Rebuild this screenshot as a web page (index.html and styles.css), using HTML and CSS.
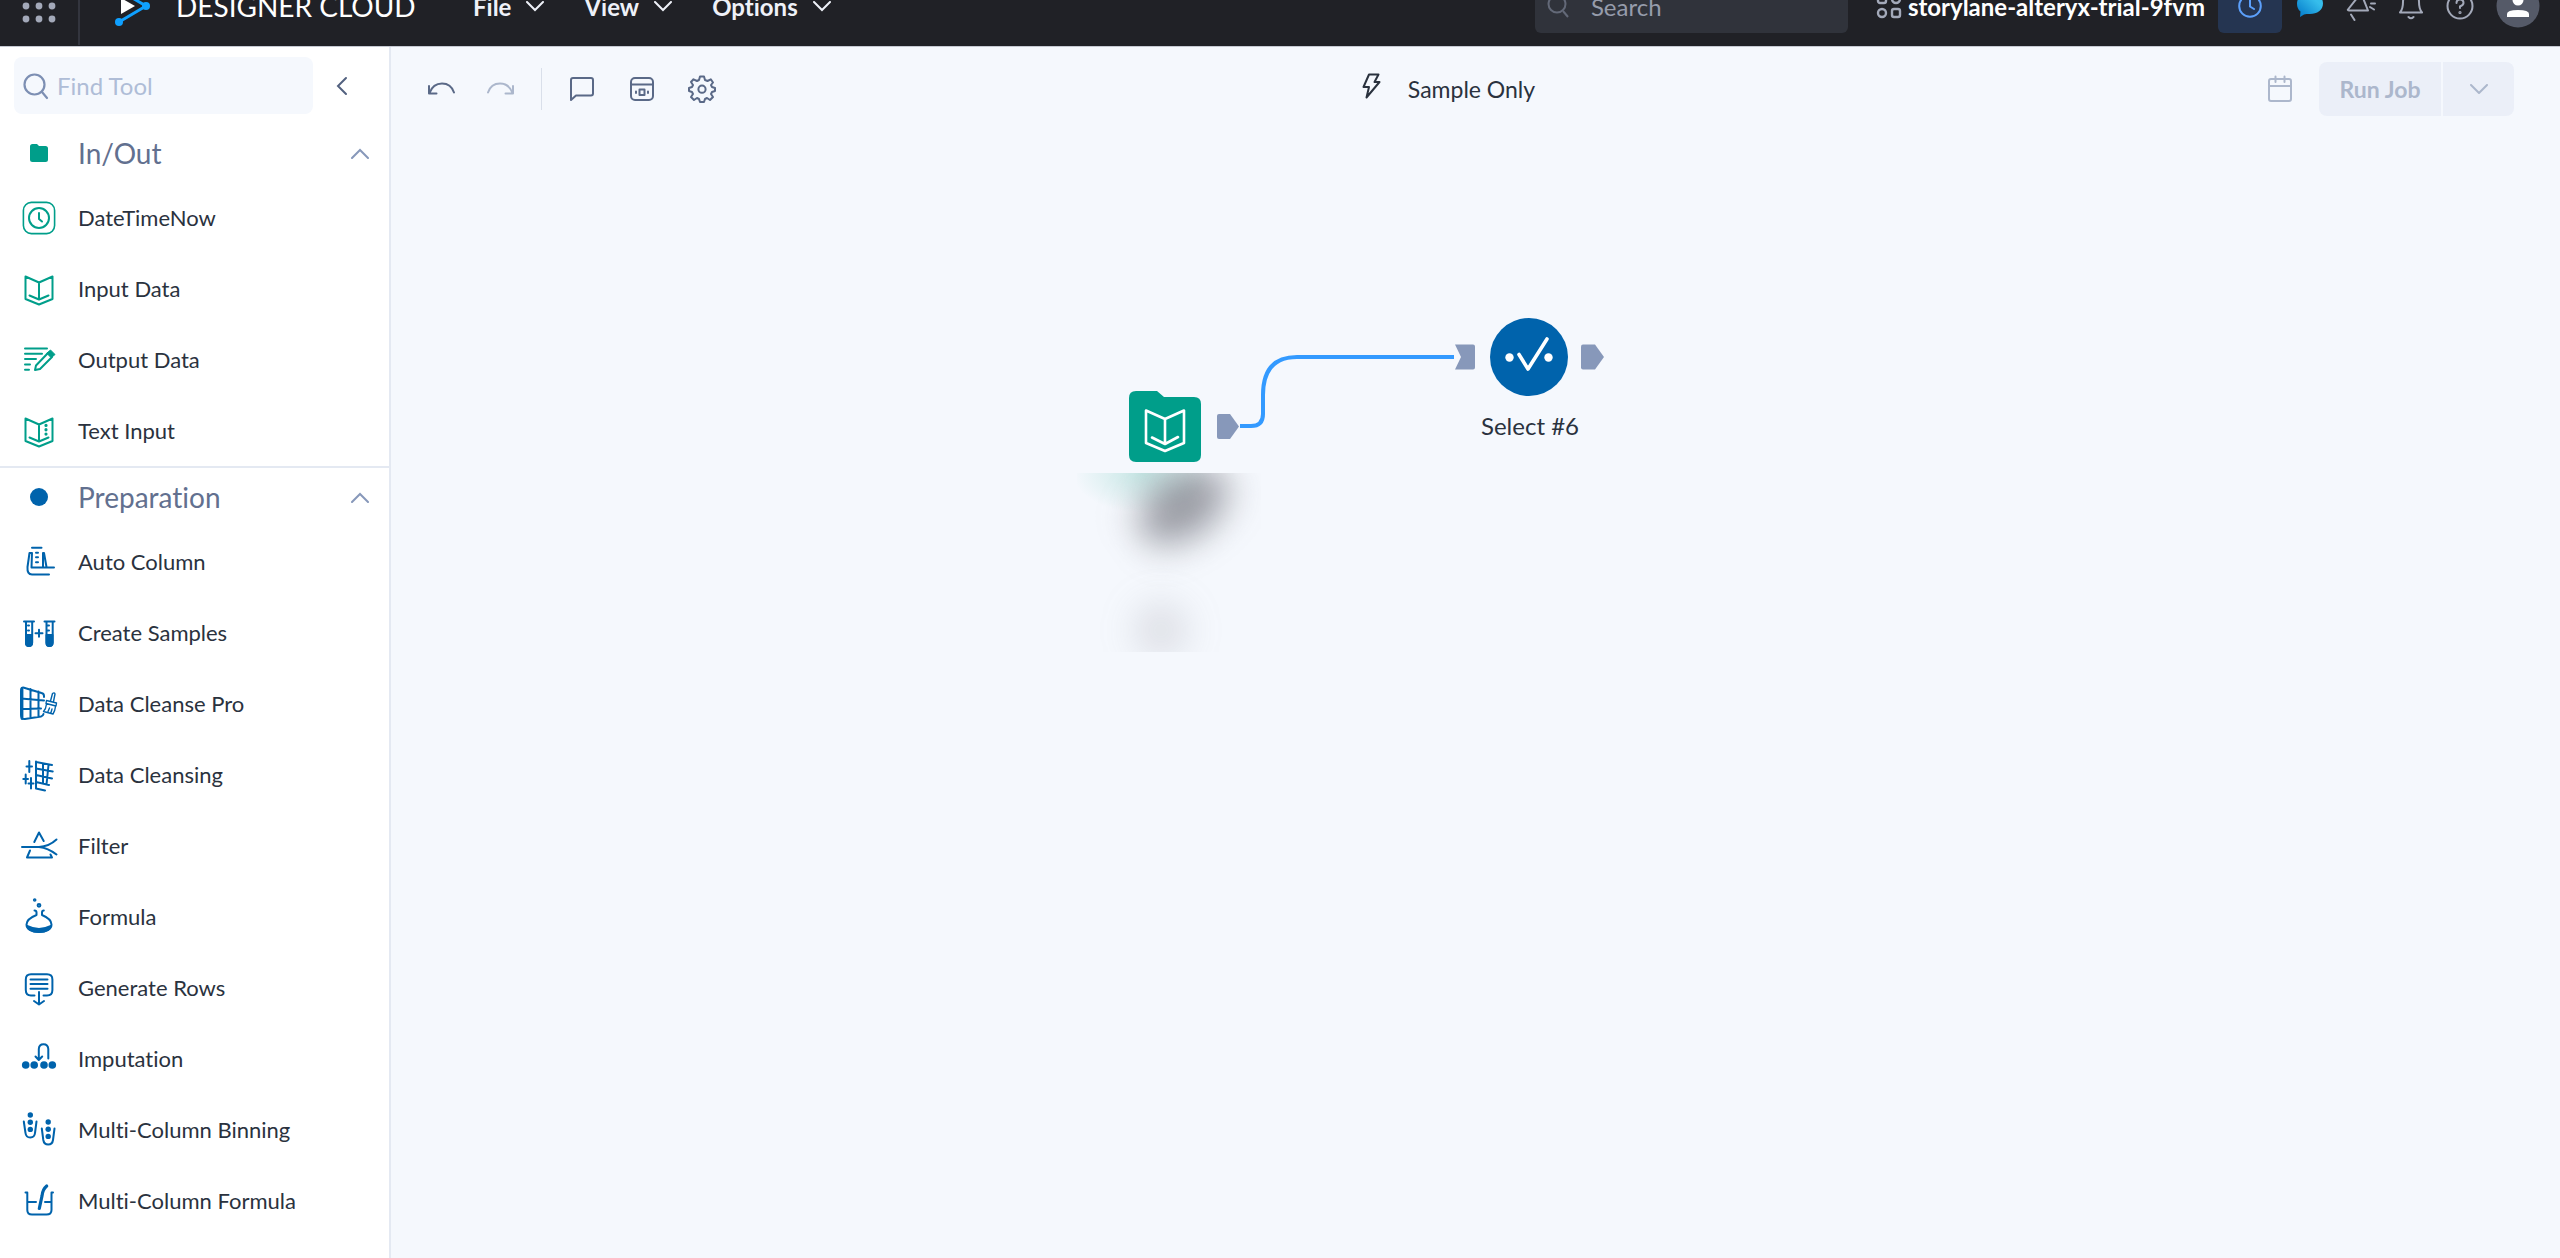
FILE: index.html
```html
<!DOCTYPE html>
<html lang="en">
  <head>
    <meta charset="utf-8">
    <title>Designer Cloud</title>
    <link rel="stylesheet" href="styles.css">
  </head>
  <body>
    <header class="topbar">
      <button class="apps" aria-label="Apps">
        <svg width="34" height="34" viewBox="0 0 34 34" fill="#a3a9b9">
          <circle cx="4" cy="4" r="3.4"/><circle cx="17" cy="4" r="3.4"/><circle cx="30" cy="4" r="3.4"/>
          <circle cx="4" cy="17" r="3.4"/><circle cx="17" cy="17" r="3.4"/><circle cx="30" cy="17" r="3.4"/>
          <circle cx="4" cy="30" r="3.4"/><circle cx="17" cy="30" r="3.4"/><circle cx="30" cy="30" r="3.4"/>
        </svg>
      </button>
      <a class="brand" href="#">
        <svg width="38" height="40" viewBox="0 0 38 40">
          <path d="M5 4L32 20L5 36" fill="none" stroke="#0fa0ff" stroke-width="3"/>
          <circle cx="5" cy="4" r="4" fill="#0fa0ff"/><circle cx="32" cy="20" r="4" fill="#0fa0ff"/><circle cx="5" cy="36" r="4" fill="#0fa0ff"/>
          <path d="M7 12L21 20L7 28Z" fill="#fff"/>
        </svg>
        <span class="brand-name">DESIGNER CLOUD</span>
      </a>
      <nav class="menu">
        <button>File <svg class="caret" viewBox="0 0 18 11"><path d="M1 1L9 9L17 1"/></svg></button>
        <button>View <svg class="caret" viewBox="0 0 18 11"><path d="M1 1L9 9L17 1"/></svg></button>
        <button>Options <svg class="caret" viewBox="0 0 18 11"><path d="M1 1L9 9L17 1"/></svg></button>
      </nav>
      <label class="global-search">
        <svg width="22" height="24" viewBox="0 0 22 24" fill="none" stroke="#636978" stroke-width="2"><circle cx="10" cy="10" r="8.5"/><path d="M16 17L21 23"/></svg>
        <input type="text" placeholder="Search" aria-label="Search">
      </label>
      <button class="workspace">
        <svg width="26" height="26" viewBox="0 0 26 26" fill="none" stroke="#a3a9b9" stroke-width="2.4"><rect x="2" y="2" width="8" height="8" rx="2"/><circle cx="20" cy="6" r="4"/><circle cx="6" cy="20" r="4"/><rect x="16" y="16" width="8" height="8" rx="2"/></svg>
        storylane-alteryx-trial-9fvm
      </button>
      <div class="actions">
        <button class="trial" aria-label="Trial time">
          <svg width="24" height="24" viewBox="0 0 24 24" fill="none" stroke="#5ca0fb" stroke-width="2" stroke-linecap="round"><circle cx="12" cy="12" r="10.8"/><path d="M12 5V12.5L16 15"/></svg>
        </button>
        <button aria-label="Chat">
          <svg width="28" height="28" viewBox="0 0 28 28">
            <linearGradient id="chat" x1="1" y1="0" x2="0" y2="1"><stop offset="0.3" stop-color="#36bdeb"/><stop offset="1" stop-color="#0076c8"/></linearGradient>
            <path d="M14 1C21 1 27 5 27 11.5S21 22 14 22C11.5 22 9.5 22 8 22.5L4 25L4.5 19.5C2 17.5 1 15 1 11.5C1 5 7 1 14 1Z" fill="url(#chat)"/>
          </svg>
        </button>
        <button aria-label="What's new">
          <svg width="30" height="32" viewBox="0 0 30 32" fill="none" stroke="#a3a9b9" stroke-width="2" stroke-linecap="round" stroke-linejoin="round"><path d="M2 19.5L15 3L22 20.5L5 20.5Q1 20.5 2 19.5M5 24.5L8.5 30M24 8.500L27 6M25 13.5H29M24 17L28 19.5"/></svg>
        </button>
        <button aria-label="Notifications">
          <svg width="26" height="30" viewBox="0 0 26 30" fill="none" stroke="#a3a9b9" stroke-width="2" stroke-linecap="round" stroke-linejoin="round"><path d="M2 21.5Q5 18 5 11Q5 3 13 3T21 11Q21 18 24 21.5ZM10.5 26Q13 28.5 15.5 26"/></svg>
        </button>
        <button aria-label="Help">
          <svg width="28" height="28" viewBox="0 0 28 28" fill="none" stroke="#a3a9b9" stroke-width="2" stroke-linecap="round"><circle cx="14" cy="14" r="12.5"/><path d="M10.5 11Q10.5 7.5 14 7.5T17.5 11Q17.5 13 14 14.5V16"/><circle cx="14" cy="20.5" r="0.6"/></svg>
        </button>
        <button class="avatar" aria-label="Account">
          <svg width="44" height="44" viewBox="0 0 44 44"><circle cx="22" cy="22" r="21.5" fill="#555a68"/><circle cx="22" cy="16" r="5.5" fill="#fff"/><path d="M11 33V30Q11 26 22 26T33 30V33Z" fill="#fff"/></svg>
        </button>
      </div>
    </header>

    <div class="workarea">
      <aside class="sidebar">
        <div class="find">
          <label class="find-box">
            <svg width="28" height="28" viewBox="0 0 28 28" fill="none" stroke="#7d8fb3" stroke-width="2.2" stroke-linecap="round"><circle cx="12.5" cy="12.5" r="10"/><path d="M20 20L25 26"/></svg>
            <input type="text" placeholder="Find Tool" aria-label="Find Tool">
          </label>
          <button class="collapse" aria-label="Collapse panel"><svg width="12" height="20" viewBox="0 0 12 20"><path d="M10 2L2 10L10 18"/></svg></button>
        </div>

        <section class="group green">
          <button class="group-head">
            <svg width="40" height="20" viewBox="0 0 40 20"><path d="M11 3.5Q11 1 13.5 1H18L20 3H26.5Q29 3 29 5.5V16.5Q29 19 26.5 19H13.5Q11 19 11 16.5Z" fill="#009e8a"/></svg>
            <span>In/Out</span>
            <svg class="fold" viewBox="0 0 18 11"><path d="M1 10L9 2L17 10"/></svg>
          </button>
          <ul class="tools">
            <li><button><svg class="icon" viewBox="0 0 40 40"><rect x="4.4" y="4.4" width="31.2" height="31.2" rx="8" stroke-width="1.6"/><circle cx="20" cy="20" r="10"/><path d="M20 15V21L23 23.5"/></svg>DateTimeNow</button></li>
            <li><button><svg class="icon" viewBox="0 0 40 40"><path d="M6.5 7.5L20 13.5L33.5 7.5V30L20 35.5L6.5 30ZM20 13.5V30M10.5 26.5L20 30.5L29.5 26.5"/></svg>Input Data</button></li>
            <li><button><svg class="icon" viewBox="0 0 40 40"><path d="M6 8.5H28M6 13.8H23M6 19H17M6 24.4H11M6 29.7H10M16 30L17 25.5L29 13L33 17L21 29Z"/><path d="M28 13L31.5 10L36 14.5L32.5 17.5Z" fill="#009e8a" stroke-width="1"/></svg>Output Data</button></li>
            <li><button><svg class="icon" viewBox="0 0 40 40"><path d="M6.5 7.5L20 13.5L33.5 7.5V30L20 35.5L6.5 30ZM20 13.5V30M10.5 26.5L20 30.5L29.5 26.5"/><path d="M27 14.3V14.4M27 18.7V18.8M27 23V23.1" stroke-width="3.2"/></svg>Text Input</button></li>
          </ul>
        </section>

        <section class="group blue">
          <button class="group-head">
            <svg width="40" height="20" viewBox="0 0 40 20"><circle cx="20" cy="10" r="9" fill="#0063ac"/></svg>
            <span>Preparation</span>
            <svg class="fold" viewBox="0 0 18 11"><path d="M1 10L9 2L17 10"/></svg>
          </button>
          <ul class="tools">
            <li><button><svg class="icon" viewBox="0 0 40 40"><path d="M13 5.7H22.500M10.5 11H13L12.5 25.5H35M10.5 11L8.5 25Q8 32.5 13 32.5H30M24 25V11H25L27.5 25M17 10.7H19M17 15.2H19M17 20.2H19"/></svg>Auto Column</button></li>
            <li><button><svg class="icon" viewBox="0 0 40 40"><path d="M5 8.5H15M7 8.5V29.5Q7 33 10 33T13.2 29.5V8.5M9 12.5H10M9 17.5H10M25.5 8.5H35.5M27.5 8.5V29.5Q27.5 33 30.5 33T33.7 29.5V8.5M29 12.5H30M29 17.5H30M16.5 20.3H23.5M20 16.8V23.8"/><path d="M7 22H13V30Q13 33 10 33T7 30ZM27.5 22H33.5V30Q33.5 33 30.5 33T27.5 30Z" fill="#0063ac"/></svg>Create Samples</button></li>
            <li><button><svg class="icon" viewBox="0 0 40 40"><path d="M25 13V12Q25 9.5 22.5 9L5 3.7Q2 3 2 7V31Q2 35.5 6 35L22 32.5Q24 32 24.5 30M2 14.5L25 16.5M2 25L22 24.5M11.5 5V34M19.5 7.5V32.5"/><path d="M3 4.5V34.5" stroke-width="2.8"/><path d="M31.5 17L33.5 9.5Q35.5 8 36 10L34.5 17.500M27.500 16.5L37.5 19L37 22L27 19.5ZM27.5 20Q27 25 24.5 27.5L34 30Q36 27 36.5 22.5M30.5 24L29 27.5M33 25L32 28.5" stroke-width="1.4"/></svg>Data Cleanse Pro</button></li>
            <li><button><svg class="icon" viewBox="0 0 40 40"><path d="M10.3 6V17M7.5 11.5H13M6.7 19.5V28.5M4.3 24H9M12 23V33.5M9.5 28.5H14.5M17 6.5V33.5L26 35.5M17 7L33 10M17 13.5L33.7 16.5M17 20L33 23.5M17 27L30 30M24 8.5V28.5M29.5 10L27.5 29.5"/></svg>Data Cleansing</button></li>
            <li><button><svg class="icon" viewBox="0 0 40 40"><path d="M15.3 16L20 6.5L24.7 15M3 21H20Q30 20.5 37.5 13.5M20 21Q29 22 37.5 28.5M11 24.5L8 31.5H33L31.5 28.5"/></svg>Filter</button></li>
            <li><button><svg class="icon" viewBox="0 0 40 40"><circle cx="15.7" cy="3" r="0.8"/><circle cx="20" cy="8.3" r="1.4"/><path d="M15.5 13.5Q17.5 13.5 17.5 15.5V18Q7.5 22 7.5 27.5C7.5 32 12 35 20 35S32.5 32 32.5 27.5Q32.5 22 23 18V15.5Q23 13.5 24.8 13.5"/><path d="M8 29Q14 32 20 32T32 29Q30 35 20 35T8 29Z" fill="#0063ac"/></svg>Formula</button></li>
            <li><button><svg class="icon" viewBox="0 0 40 40"><path d="M15.5 27.5H12Q6.8 27.5 6.8 22V11.5Q6.8 6.3 12 6.3H28Q33.4 6.3 33.4 11.5V22Q33.4 27.5 28 27.5H24.5M11.5 11.5H28.5M11.5 16H28.5M11.5 20.7H28.5M20 24V36M15 33L20 36.5L25 33"/></svg>Generate Rows</button></li>
            <li><button><svg class="icon" viewBox="0 0 40 40"><path d="M29.3 19.5V10Q29 5.2 24.5 5.2T19.8 10V20.5M16.5 17.5L19.8 21L23.2 17.5"/><g fill="#0063ac" stroke="none"><circle cx="6.7" cy="26" r="3.8"/><circle cx="15.2" cy="26" r="3.8"/><circle cx="25" cy="26" r="3.8"/><circle cx="33.3" cy="26" r="3.8"/></g></svg>Imputation</button></li>
            <li><button><svg class="icon" viewBox="0 0 40 40"><path d="M4.8 11.5L6.5 23Q7 27.5 11.3 27.5T16 23L17.5 11.5M22.8 18.5L24.3 30Q25 34.5 29.2 34.5T34 30L35.5 18.5"/><g fill="#0063ac" stroke="none"><circle cx="11.3" cy="5" r="2.7"/><circle cx="11.3" cy="12.2" r="2.7"/><circle cx="11.3" cy="19.4" r="2.7"/><circle cx="29.2" cy="12" r="2.7"/><circle cx="29.2" cy="19.2" r="2.7"/><circle cx="29.2" cy="26.4" r="2.7"/></g></svg>Multi-Column Binning</button></li>
            <li><button><svg class="icon" viewBox="0 0 40 40"><path d="M6.5 11.5H8.3V29Q8.3 33.5 13 33.5H27.5Q32.5 33.5 32.5 29V11.5H34M8.5 21H17M26 21H32.5"/><path d="M27.7 5Q23.5 8.5 23 15L20.3 27.5" stroke-width="3.2"/></svg>Multi-Column Formula</button></li>
          </ul>
        </section>
      </aside>

      <main class="main">
        <div class="toolbar">
          <div class="tools-left">
            <button aria-label="Undo"><svg width="28" height="28" viewBox="0 0 28 28"><path d="M2 11V18.5H9.5M2.5 18Q6 8.5 15 8.5T27 17.5"/></svg></button>
            <button aria-label="Redo" disabled><svg width="28" height="28" viewBox="0 0 28 28"><path d="M26 11V18.5H18.5M25.5 18Q22 8.5 13 8.5T1 17.5"/></svg></button>
            <span class="divider"></span>
            <button aria-label="Comment"><svg width="28" height="28" viewBox="0 0 28 28"><path d="M3 25V5Q3 3 5 3H23Q25 3 25 5V18.5Q25 20.5 23 20.5H8Z"/></svg></button>
            <button aria-label="Results panel"><svg width="28" height="28" viewBox="0 0 28 28"><rect x="3" y="3" width="22" height="22" rx="4"/><path d="M3 9.5H25M11.5 14.5H16.5V20H11.5ZM8 16.5V18M20 16.5V18"/></svg></button>
            <button aria-label="Settings"><svg width="28" height="28" viewBox="0 0 28 28"><path d="M12 1.5H16L17 5L19.5 6L22.8 4.3L25 7.5L23 10L24 12L27 13V16L24 17L23 19L25 22L22 25L19 23L17 24L16 27H12L11 24L9 23L6 25L3 22L5 19L4 17L1 16V13L4 12L5 10L3 7L5.5 4.3L9 6L11 5Z"/><circle cx="14" cy="14.2" r="3.6"/></svg></button>
          </div>
          <div class="mode">
            <svg width="20" height="26" viewBox="0 0 20 26" fill="none" stroke="#2a323e" stroke-width="2" stroke-linejoin="round"><path d="M7 1.5H16.5L12.5 9H17.5L4.5 24.5L7 14H1.5Z"/></svg>
            <span>Sample Only</span>
          </div>
          <div class="run">
            <button class="schedule" aria-label="Schedule" disabled><svg width="28" height="28" viewBox="0 0 28 28"><rect x="3" y="4" width="22" height="22" rx="2"/><path d="M3 11H25M9.5 1.5V7M18.5 1.5V7"/></svg></button>
            <div class="split">
              <button class="run-job" disabled>Run Job</button>
              <button class="run-more" aria-label="Run options" disabled><svg class="caret" viewBox="0 0 18 11"><path d="M1 1L9 9L17 1"/></svg></button>
            </div>
          </div>
        </div>

        <div class="canvas">
          <!-- connection between the two nodes -->
          <svg class="edge" width="216" height="76" viewBox="0 0 216 76"><path d="M0 73H11Q23 73 23 61V42Q23 4 57 4H214"/></svg>

          <div class="node node-input">
            <svg width="112" height="76" viewBox="0 0 112 76">
              <path d="M0 8Q0 1 7 1H28L35 7H65Q72 7 72 14V65Q72 72 65 72H7Q0 72 0 65Z" fill="#009e8a"/>
              <path d="M17 20.5L36 29L55 20.5V53L36 61L17 53ZM36 29V54M23 47.5L36 54L49 47" fill="none" stroke="#fff" stroke-width="2.6" stroke-linecap="round" stroke-linejoin="round"/>
              <path d="M88 26Q88 24 90 24H101L110 36.5L101 49H90Q88 49 88 47Z" fill="#8798ba"/>
            </svg>
            <div class="redacted"></div>
          </div>

          <div class="node node-select">
            <svg width="150" height="80" viewBox="0 0 150 80">
              <path d="M0 27.5H18Q20 27.5 20 29.5V50.5Q20 52.5 18 52.5H0L6 40Z" fill="#8798ba"/>
              <circle cx="74" cy="40" r="39" fill="#0063ac"/>
              <circle cx="54.5" cy="40.5" r="4.2" fill="#fff"/><circle cx="93.5" cy="40.5" r="4.2" fill="#fff"/>
              <path d="M64 37.5L73 52L92 22" fill="none" stroke="#fff" stroke-width="3.6" stroke-linecap="round" stroke-linejoin="round"/>
              <path d="M126 29.5Q126 27.5 128 27.5H140L149 40L140 52.5H128Q126 52.5 126 50.5Z" fill="#8798ba"/>
            </svg>
            <span class="node-label">Select #6</span>
          </div>
        </div>
      </main>
    </div>
  </body>
</html>
```
FILE: styles.css
```css
* { box-sizing: border-box; }

html, body { height: 100%; }

body {
  margin: 0;
  display: flex;
  flex-direction: column;
  overflow: hidden;
  font-family: Lato, "Liberation Sans", sans-serif;
  font-size: 24px;
  font-variant-ligatures: none;
  color: #2a323e;
  background: #f5f8fd;
}

button, input {
  font: inherit;
  font-variant-ligatures: none;
  color: inherit;
  border: 0;
  padding: 0;
  background: none;
}

button {
  display: flex;
  align-items: center;
  cursor: pointer;
}

svg { display: block; flex: none; }

input:focus { outline: none; }

/* top bar, scrolled partly out of view */
.topbar {
  flex: none;
  display: flex;
  align-items: center;
  height: 79px;
  margin-top: -32px;
  padding: 0 20px 2px 0;
  background: #202126;
  border-bottom: 1px solid #c5c9d2;
  color: #fff;
}

.apps {
  width: 80px;
  height: 78px;
  justify-content: center;
  border-right: 2px solid #33353e;
}

.brand {
  display: flex;
  align-items: center;
  gap: 24px;
  margin-left: 34px;
  width: 325px;
  color: #fff;
  text-decoration: none;
}

.brand-name { font-size: 28px; white-space: nowrap; }

.caret {
  width: 18px;
  height: 11px;
  fill: none;
  stroke: currentColor;
  stroke-width: 2;
  stroke-linecap: round;
}

.menu {
  display: flex;
  gap: 40px;
  margin-left: 34px;
  font-weight: bold;
}

.menu button { gap: 15px; color: #eef1f8; }

.global-search {
  display: flex;
  align-items: center;
  gap: 22px;
  width: 313px;
  height: 54px;
  margin-left: auto;
  padding-left: 12px;
  border-radius: 6px;
  background: #30333b;
}

.global-search input { width: 200px; }
.global-search input::placeholder { color: #969cab; opacity: 1; }

.workspace {
  gap: 6px;
  margin-left: 28px;
  font-weight: bold;
  white-space: nowrap;
}

.actions {
  display: flex;
  align-items: center;
  gap: 22px;
  margin-left: 13px;
}

.trial {
  justify-content: center;
  width: 64px;
  height: 54px;
  margin-right: -8px;
  border-radius: 6px;
  background: #253551;
}

.workarea {
  flex: 1;
  display: flex;
  min-height: 0;
}

/* tool palette */
.sidebar {
  flex: none;
  width: 391px;
  overflow: hidden;
  background: #fff;
  border-right: 2px solid #e4e9f2;
}

.find {
  display: flex;
  align-items: center;
  height: 77px;
  padding-left: 14px;
}

.find-box {
  display: flex;
  align-items: center;
  gap: 7px;
  width: 299px;
  height: 57px;
  padding-left: 8px;
  border-radius: 8px;
  background: #f5f8fd;
}

.find-box input { width: 230px; }
.find-box input::placeholder { color: #afbdd7; opacity: 1; }

.collapse { margin-left: 23px; }
.collapse path { fill: none; stroke: #52617f; stroke-width: 2; stroke-linecap: round; }

.group + .group { border-top: 2px solid #e4e9f2; }

.group-head {
  width: 100%;
  height: 58px;
  gap: 19px;
  padding: 0 20px 0 19px;
  font-size: 28px;
  color: #62708f;
}

.fold {
  width: 18px;
  height: 11px;
  margin-left: auto;
  fill: none;
  stroke: #8798ba;
  stroke-width: 2;
  stroke-linecap: round;
}

.tools { list-style: none; margin: 0; padding: 0; }

.tools button {
  width: 100%;
  height: 71px;
  gap: 19px;
  padding-left: 19px;
  font-size: 22px;
}

.icon {
  width: 40px;
  height: 40px;
  fill: none;
  stroke-width: 2;
  stroke-linecap: round;
  stroke-linejoin: round;
}

.green .icon { stroke: #009e8a; }
.blue .icon { stroke: #0063ac; }

.main {
  flex: 1;
  display: flex;
  flex-direction: column;
  min-width: 0;
}

.toolbar {
  display: grid;
  grid-template-columns: 1fr auto 1fr;
  align-items: center;
  height: 84px;
  padding: 0 46px 0 36px;
}

.tools-left { display: flex; align-items: center; gap: 32px; }

.toolbar button svg {
  fill: none;
  stroke: currentColor;
  stroke-width: 2;
  stroke-linecap: round;
  stroke-linejoin: round;
}

.tools-left button { color: #5a6987; }
.toolbar button:disabled { color: #acb7cc; }

.divider {
  width: 1px;
  height: 42px;
  margin: 0 -6px;
  background: #d9dfea;
}

.mode {
  display: flex;
  align-items: center;
  gap: 26px;
  padding-right: 44px;
  font-size: 23px;
}

.mode svg { margin-bottom: 6px; }

.run {
  display: flex;
  align-items: center;
  justify-content: flex-end;
  gap: 25px;
}

.split { display: flex; gap: 2px; }

.split button {
  justify-content: center;
  height: 54px;
  background: #ebeff8;
}

.run-job {
  width: 122px;
  border-radius: 8px 0 0 8px;
  font-size: 23px;
  font-weight: bold;
}

.run-more {
  width: 71px;
  border-radius: 0 8px 8px 0;
}

/* free canvas, nodes sit where the user dropped them */
.canvas {
  flex: 1;
  position: relative;
  overflow: hidden;
}

.edge {
  position: absolute;
  left: 849px;
  top: 222px;
  fill: none;
  stroke: #339aff;
  stroke-width: 4;
}

.node { position: absolute; }

.node-input { left: 738px; top: 259px; }

.node-select {
  left: 1064px;
  top: 186px;
  display: flex;
  flex-direction: column;
  align-items: center;
  gap: 14px;
}

/* blurred out file name under the input node */
.redacted {
  position: relative;
  overflow: hidden;
  width: 184px;
  height: 179px;
  margin: 7px 0 0 -52px;
  background: radial-gradient(ellipse 70px 40px at 66px 0, rgba(80, 190, 170, 0.28), transparent);
}

.redacted::before,
.redacted::after {
  content: "";
  position: absolute;
  border-radius: 50%;
  filter: blur(18px);
}

.redacted::before {
  left: 56px;
  top: 2px;
  width: 100px;
  height: 62px;
  background: rgba(90, 92, 102, 0.6);
  transform: rotate(-35deg);
}

.redacted::after {
  left: 58px;
  top: 130px;
  width: 52px;
  height: 54px;
  background: rgba(120, 122, 130, 0.2);
}
```
